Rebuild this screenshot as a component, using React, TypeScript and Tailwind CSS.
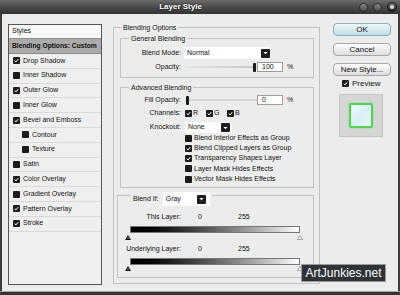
import React from 'react';

const styleItems = [
  { label: 'Drop Shadow', checked: true },
  { label: 'Inner Shadow', checked: false },
  { label: 'Outer Glow', checked: true },
  { label: 'Inner Glow', checked: false },
  { label: 'Bevel and Emboss', checked: true },
  { label: 'Contour', checked: false, sub: true },
  { label: 'Texture', checked: false, sub: true },
  { label: 'Satin', checked: false },
  { label: 'Color Overlay', checked: true },
  { label: 'Gradient Overlay', checked: false },
  { label: 'Pattern Overlay', checked: true },
  { label: 'Stroke', checked: true },
];

const knockoutOpts = [
  { label: 'Blend Interior Effects as Group', checked: false },
  { label: 'Blend Clipped Layers as Group', checked: true },
  { label: 'Transparency Shapes Layer', checked: true },
  { label: 'Layer Mask Hides Effects', checked: false },
  { label: 'Vector Mask Hides Effects', checked: false },
];

function Check({ checked = false }: { checked?: boolean }) {
  return (
    <span className="flex h-[7px] w-[7px] shrink-0 items-center justify-center rounded-[1px] bg-[#1c1c1c]">
      {checked && (
        <svg width="5" height="5" viewBox="0 0 5 5">
          <path d="M0.7 2.7 L2 3.9 L4.3 1.1" stroke="#fff" strokeWidth="1" fill="none" />
        </svg>
      )}
    </span>
  );
}

function Arrow() {
  return (
    <span className="flex h-[9px] w-[9px] shrink-0 items-center justify-center rounded-[1px] bg-[#1e1e1e]">
      <svg width="5" height="4" viewBox="0 0 5 4">
        <path d="M0.5 1 H4.5 L2.5 3.2 Z" fill="#fff" />
      </svg>
    </span>
  );
}

function Select({ value, className }: { value: string; className: string }) {
  return (
    <div className={`flex items-center bg-white ${className}`}>
      <span className="flex-1 pl-[3px] text-[7px]">{value}</span>
      <Arrow />
    </div>
  );
}

function Slider({ at }: { at: number }) {
  return (
    <div className="flex h-[9px] w-[72px] items-center">
      <span className="h-[2px] bg-gradient-to-r from-[#e4e4e4] to-[#c9c9c9]" style={{ width: at }} />
      <span className="h-[9px] w-[3px] rounded-[1px] bg-[#1a1a1a]" />
      <span className="h-[2px] flex-1 bg-[#d4d4d4]" />
    </div>
  );
}

function NumInput({ value }: { value: string }) {
  return (
    <div className="flex h-[10px] w-[26px] items-center border border-[#9c9c9c] bg-white pl-[4px] text-[7px]">
      {value}
    </div>
  );
}

function Handles() {
  return (
    <div className="ml-[7px] mt-[1.5px] flex h-[5px] w-[178px] items-end justify-between">
      <svg width="6" height="5" viewBox="0 0 6 5">
        <path d="M3 0 L6 5 H0 Z" fill="#111" />
        <rect x="2.5" y="2.6" width="1" height="1" fill="#fff" />
      </svg>
      <svg width="6" height="5" viewBox="0 0 6 5">
        <path d="M3 0.5 L5.6 4.6 H0.4 Z" fill="#fafafa" stroke="#8a8a8a" strokeWidth="0.8" />
      </svg>
    </div>
  );
}

export default function App() {
  return (
    <div className="relative h-[295px] w-[400px] overflow-hidden bg-[#ececec] font-['Liberation_Sans',Arial,sans-serif] text-[#111]">
      {/* title bar */}
      <div className="flex h-[14px] items-center bg-gradient-to-b from-[#6c6c6c] via-[#4a4a4a] to-[#333] pr-[3px]">
        <span className="flex-1 pl-[2px] text-center text-[8px] font-bold text-white [text-shadow:0_0_2px_#000]">
          Layer Style
        </span>
        <div className="flex items-center gap-[5px]">
          <span className="h-[9px] w-[9px] rounded-full border border-[#2b2b2b] bg-gradient-to-b from-[#8a8a8a] to-[#4a4a4a]" />
          <span className="h-[9px] w-[9px] rounded-full border border-[#2b2b2b] bg-gradient-to-b from-[#8a8a8a] to-[#4a4a4a]" />
          <span className="flex h-[10px] w-[10px] items-center justify-center rounded-full border border-[#1a1a1a] bg-gradient-to-b from-[#777] to-[#222]">
            <span className="h-[4px] w-[4px] rounded-full bg-[#ddd]" />
          </span>
        </div>
      </div>

      {/* body */}
      <div className="flex h-[277px] border-x-2 border-[#3c3c3c]">
        {/* styles list */}
        <div className="ml-[6px] mt-[10px] flex h-[261px] w-[94px] flex-col border border-[#555] bg-[#efefef]">
          <div className="flex h-[14px] items-center border-b border-[#8e8e8e] bg-[#f7f7f7] pl-[3px] text-[7px]">
            Styles
          </div>
          <div className="flex h-[15px] items-center border-b border-[#8a8a8a] bg-[#ababab] pl-[3px] text-[6.7px] font-bold">
            Blending Options: Custom
          </div>
          {styleItems.map((s) => (
            <div
              key={s.label}
              className={`flex h-[14.8px] items-center gap-[2px] border-b border-[#dadada] text-[7px] ${s.sub ? 'pl-[13px]' : 'pl-[4px]'}`}
            >
              <Check checked={s.checked} />
              <span className="ml-[1px]">{s.label}</span>
            </div>
          ))}
        </div>

        {/* blending options */}
        <fieldset className="ml-[11px] mt-[9px] h-fit w-[207px] border border-[#c2c2c2] pb-[5px] pl-[6px] pr-[5px] text-[7px]">
          <legend className="ml-[1px] px-[2px] text-[7px] leading-[9px]">Blending Options</legend>

          <fieldset className="mt-[1.5px] border border-[#c2c2c2] pb-[4px]">
            <legend className="ml-[8px] px-[2px] leading-[9px]">General Blending</legend>
            <div className="mt-[4px] flex h-[13px] items-center">
              <span className="w-[60px] text-right">Blend Mode:</span>
              <Select value="Normal" className="ml-[3px] h-[12px] w-[86px] pr-[0px]" />
            </div>
            <div className="mt-[2px] flex h-[11px] items-center">
              <span className="w-[60px] text-right">Opacity:</span>
              <div className="ml-[4px]">
                <Slider at={68} />
              </div>
              <NumInput value="100" />
              <span className="ml-[4px]">%</span>
            </div>
          </fieldset>

          <fieldset className="mt-[5px] border border-[#c2c2c2] pb-[2.5px]">
            <legend className="ml-[8px] px-[2px] leading-[9px]">Advanced Blending</legend>
            <div className="mt-[3px] flex h-[11px] items-center">
              <span className="w-[60px] text-right">Fill Opacity:</span>
              <div className="ml-[4px]">
                <Slider at={1} />
              </div>
              <NumInput value="0" />
              <span className="ml-[4px]">%</span>
            </div>
            <div className="mt-[3px] flex h-[9px] items-center">
              <span className="w-[60px] text-right">Channels:</span>
              <div className="ml-[4px] flex">
                {['R', 'G', 'B'].map((c) => (
                  <span key={c} className="flex w-[21px] items-center gap-[1px]">
                    <Check checked />
                    {c}
                  </span>
                ))}
              </div>
            </div>
            <div className="mt-[4.5px] flex h-[11px] items-center">
              <span className="w-[60px] text-right">Knockout:</span>
              <Select value="None" className="ml-[4px] h-[11px] w-[47px] pr-[2px]" />
            </div>
            <div className="pl-[64px]">
              {knockoutOpts.map((o) => (
                <div key={o.label} className="flex h-[10.25px] items-center gap-[2px]">
                  <Check checked={o.checked} />
                  {o.label}
                </div>
              ))}
            </div>
          </fieldset>

          <fieldset className="-ml-[3px] mt-[3.5px] border border-[#c2c2c2] pb-[5.5px]">
            <legend className="ml-[13px] px-[2px]">
              <div className="flex h-[8px] items-start">
                <span className="mt-[3px] leading-[9px]">Blend If:</span>
                <Select value="Gray" className="ml-[4px] mt-[1px] h-[14px] w-[47px] shrink-0 pr-[4px]" />
              </div>
            </legend>
            <div className="mt-[13.5px] flex h-[9px] items-center">
              <span className="w-[63px] text-right">This Layer:</span>
              <span className="ml-[17px] w-[40px]">0</span>
              <span>255</span>
            </div>
            <div className="ml-[12px] mt-[4.5px] h-[7px] w-[170px] border border-[#777] bg-gradient-to-r from-black to-white" />
            <Handles />
            <div className="mt-[4.5px] flex h-[9px] items-center">
              <span className="w-[63px] text-right">Underlying Layer:</span>
              <span className="ml-[17px] w-[40px]">0</span>
              <span>255</span>
            </div>
            <div className="ml-[12px] mt-[4.5px] h-[7px] w-[170px] border border-[#777] bg-gradient-to-r from-black to-white" />
            <Handles />
          </fieldset>
        </fieldset>

        {/* buttons */}
        <div className="ml-[13px] mt-[9px] flex w-[58px] flex-col text-[8px]">
          <button className="h-[13px] rounded-[4px] border border-[#8fb2bb] bg-gradient-to-b from-[#eef9fb] to-[#bfdde4] leading-none">
            OK
          </button>
          <button className="mt-[7px] h-[13px] rounded-[4px] border border-[#a8a8a8] bg-gradient-to-b from-white to-[#dcdcdc] leading-none">
            Cancel
          </button>
          <button className="mt-[7px] h-[13px] rounded-[4px] border border-[#a8a8a8] bg-gradient-to-b from-white to-[#dcdcdc] leading-none">
            New Style...
          </button>
          <div className="ml-[9px] mt-[3px] flex h-[9px] items-center gap-[3px]">
            <Check checked />
            <span>Preview</span>
          </div>
          <div className="ml-[6px] mt-[6px] flex h-[43px] w-[44px] items-center justify-center border border-[#c4c4c4] bg-[#d6d6d6]">
            <div className="h-[25px] w-[24px] rounded-[2px] border-2 border-[#52d452] bg-gradient-to-br from-[#f2fbff] via-[#d8eef6] to-[#eef8fb] shadow-[0_0_2px_#7be07b]" />
          </div>
        </div>
      </div>

      {/* bottom frame */}
      <div className="h-[4px] border-t border-[#a5a5a5] bg-[#353535]" />

      {/* watermark */}
      <div className="absolute left-[301px] top-[264px] flex h-[18px] w-[85px] items-center justify-center border border-[#9a9a9a] bg-[#2f3337] text-[12px] text-white">
        ArtJunkies.net
      </div>
    </div>
  );
}
